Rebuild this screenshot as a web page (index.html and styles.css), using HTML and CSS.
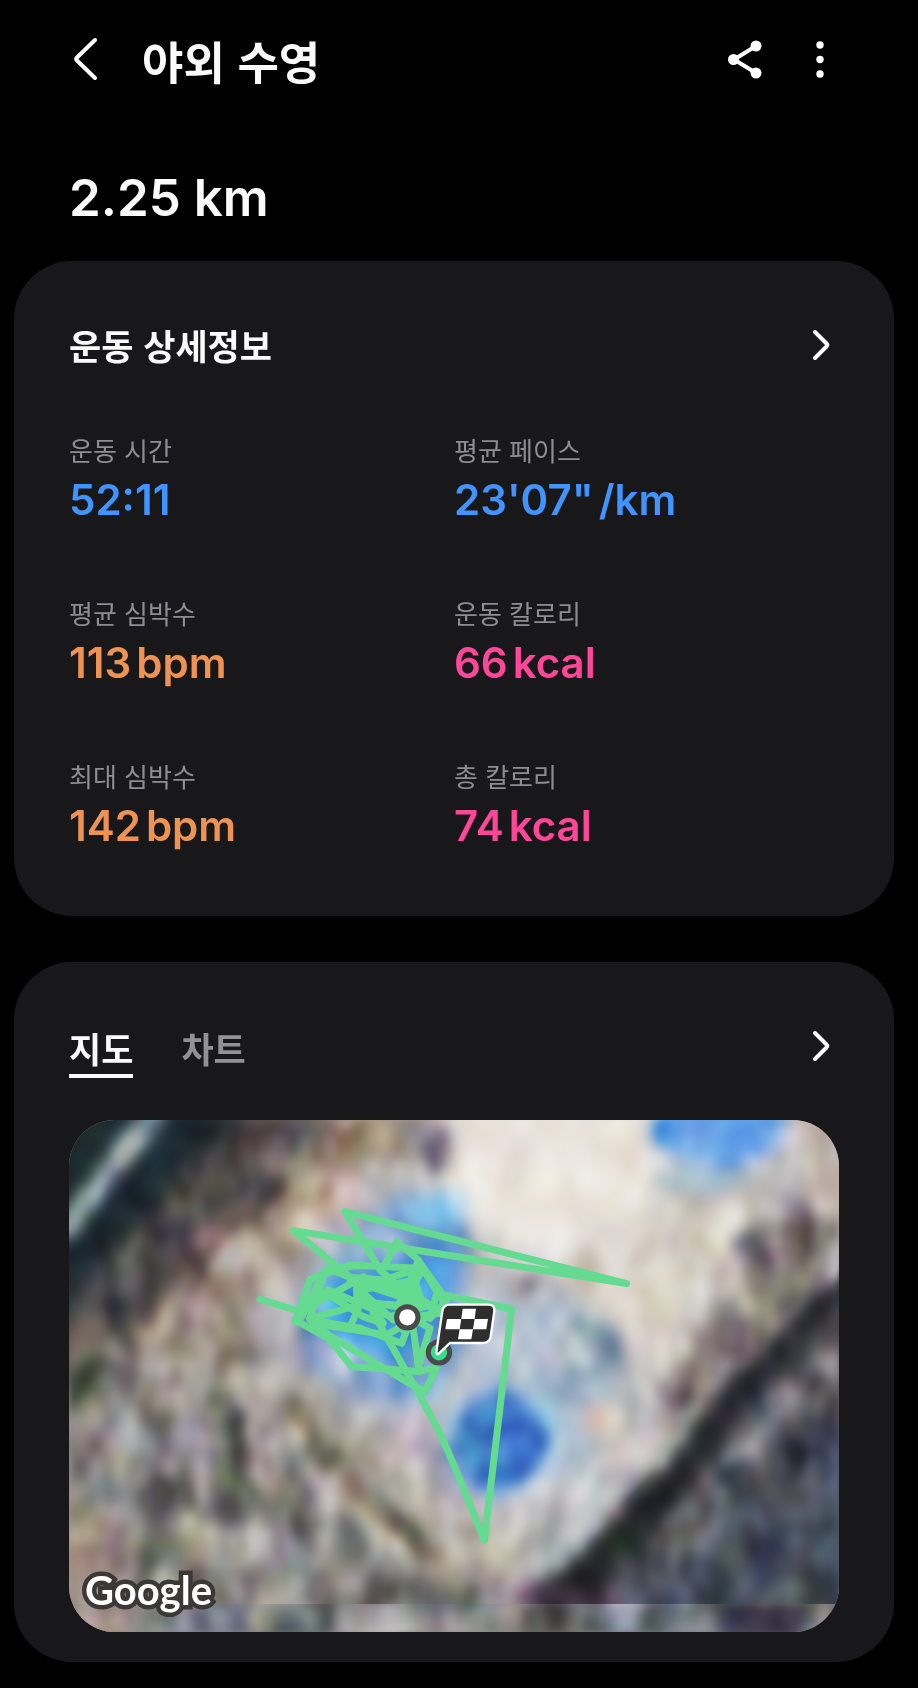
FILE: index.html
```
<!DOCTYPE html>
<html lang="ko">
<head>
    <meta charset="UTF-8">
    <meta name="viewport" content="width=device-width, initial-scale=1">
    <title>야외 수영</title>
    <link rel="stylesheet" href="styles.css">
</head>
<body>

<header class="topbar">
    <button type="button" class="icon-btn" aria-label="뒤로">
        <svg width="48" height="48" viewBox="0 0 48 48"><path class="line" d="M33 5 L15 22.500 Q13.500 24 15 25.500 L33 43"/></svg>
    </button>
    <h1>야외 수영</h1>
    <div class="actions">
        <button type="button" class="icon-btn" aria-label="공유">
            <svg width="48" height="48" viewBox="0 0 48 48">
                <path class="line" d="M35 11 L13 24.500 L35 38"/>
                <circle cx="35" cy="11" r="5.500"/>
                <circle cx="12.500" cy="24.500" r="5.500"/>
                <circle cx="35" cy="38" r="5.500"/>
            </svg>
        </button>
        <button type="button" class="icon-btn" aria-label="더보기">
            <svg width="48" height="48" viewBox="0 0 48 48">
                <circle cx="24" cy="10" r="3.700"/>
                <circle cx="24" cy="24.500" r="3.700"/>
                <circle cx="24" cy="39" r="3.700"/>
            </svg>
        </button>
    </div>
</header>

<main>
    <p class="distance">2.25 km</p>

    <section class="card">
        <div class="card-head">
            <h2>운동 상세정보</h2>
            <button type="button" class="more-btn" aria-label="운동 상세정보 보기">
                <svg width="36" height="36" viewBox="0 0 36 36"><path class="line" d="M12 5 L23.500 16.500 Q25 18 23.500 19.500 L12 31"/></svg>
            </button>
        </div>
        <dl class="stats">
            <div class="stat blue">
                <dt>운동 시간</dt>
                <dd>52:11</dd>
            </div>
            <div class="stat blue">
                <dt>평균 페이스</dt>
                <dd>23'07"<span class="unit">/km</span></dd>
            </div>
            <div class="stat orange">
                <dt>평균 심박수</dt>
                <dd>113<span class="unit">bpm</span></dd>
            </div>
            <div class="stat pink">
                <dt>운동 칼로리</dt>
                <dd>66<span class="unit">kcal</span></dd>
            </div>
            <div class="stat orange">
                <dt>최대 심박수</dt>
                <dd>142<span class="unit">bpm</span></dd>
            </div>
            <div class="stat pink">
                <dt>총 칼로리</dt>
                <dd>74<span class="unit">kcal</span></dd>
            </div>
        </dl>
    </section>

    <section class="card map-card">
        <div class="card-head">
            <div class="tabs" role="tablist">
                <button type="button" class="tab active" role="tab" aria-selected="true">지도</button>
                <button type="button" class="tab" role="tab" aria-selected="false">차트</button>
            </div>
            <button type="button" class="more-btn" aria-label="지도 보기">
                <svg width="36" height="36" viewBox="0 0 36 36"><path class="line" d="M12 5 L23.500 16.500 Q25 18 23.500 19.500 L12 31"/></svg>
            </button>
        </div>

        <svg class="map" viewBox="0 0 770 512" role="img" aria-label="수영 경로 지도">
            <defs>
                <filter id="soft" x="-20%" y="-20%" width="140%" height="140%" color-interpolation-filters="sRGB"><feGaussianBlur stdDeviation="14"/></filter>
                <filter id="mid" x="-20%" y="-20%" width="140%" height="140%" color-interpolation-filters="sRGB"><feGaussianBlur stdDeviation="8"/></filter>
                <filter id="grain" x="0" y="0" width="100%" height="100%" color-interpolation-filters="sRGB">
                    <feTurbulence type="fractalNoise" baseFrequency="0.028 0.02" numOctaves="2" seed="8"/>
                    <feColorMatrix values="1.300 .7 .4 0 -.7  1 1 .4 0 -.7  .9 .7 .8 0 -.7  0 0 0 0 1"/>
                    <feGaussianBlur stdDeviation="3"/>
                </filter>
                <clipPath id="seam"><rect x="0" y="484" width="770" height="28"/></clipPath>
            </defs>

            <!-- satellite ground -->
            <rect width="770" height="512" fill="#9c9692"/>
            <g filter="url(#soft)">
                <path d="M-30 -30 H250 L150 80 L80 180 L-30 310Z" fill="#1a272e"/>
                <path d="M190 -30 H290 L-30 340 V225Z" fill="#5d5452"/>
                <path d="M280 -30 H420 L210 150 L60 330 L-30 420 V330Z" fill="#a5948a"/>
                <path d="M400 -30 H800 V180 L560 430 L440 480 L200 270 L190 170Z" fill="#bfbec0"/>
                <path d="M380 -20 H600 L580 150 L430 130 L350 50Z" fill="#ece6de"/>
                <path d="M500 110 L690 70 L660 200 L580 260 L500 180Z" fill="#d8d1c6"/>
                <path d="M680 110 L770 60 V190 L600 350 L590 270Z" fill="#8f8584"/>
                <path d="M720 -20 H800 V100 L740 80Z" fill="#c0b2a6"/>
                <path d="M-30 270 L60 230 L170 290 L400 450 L430 540 H-30Z" fill="#8b8885"/>
                <path d="M-30 400 L50 380 L80 540 H-30Z" fill="#a08f86"/>
                <path d="M150 250 L230 270 L450 440 L440 480 L350 440Z" fill="#b5ac9f"/>
                <path d="M400 170 L500 180 L560 250 L510 360 L420 360 L390 270Z" fill="#b3c2d2"/>
                <path d="M210 210 L260 230 L340 290 L400 310 L390 380Z" fill="#b0acb9"/>
                <path d="M800 150 V260 L560 512 H430Z" fill="#3a3a41"/>
                <path d="M800 270 V540 H480 L600 440Z" fill="#4a5260"/>
                <path d="M780 235 L698 300 L648 365 L590 440" fill="none" stroke="#86838c" stroke-width="30"/>
            </g>
            <g filter="url(#mid)">
                <path d="M-10 115 L90 -10" fill="none" stroke="#9db0b8" stroke-width="20"/>
                <path d="M50 150 L130 90 L175 40" fill="none" stroke="#3f4b4f" stroke-width="10"/>
                <path d="M120 145 L210 60" fill="none" stroke="#604e49" stroke-width="18"/>
                <path d="M45 210 L130 130" fill="none" stroke="#4f4642" stroke-width="14"/>
                <path d="M195 100 L310 0" fill="none" stroke="#a89784" stroke-width="20"/>
                <path d="M230 110 L290 60" fill="none" stroke="#d8c3b5" stroke-width="16"/>
                <path d="M340 5 L380 5 L380 50 L355 55Z" fill="#868592"/>
                <path d="M160 290 L175 340 L170 350" fill="none" stroke="#5e5450" stroke-width="20"/>
                <path d="M215 280 L300 385 L370 440" fill="none" stroke="#695f53" stroke-width="22"/>
                <path d="M115 370 L125 390 M195 375 V410 M90 430 L60 480" fill="none" stroke="#565553" stroke-width="16"/>
                <path d="M5 265 L35 235" fill="none" stroke="#3c4038" stroke-width="22"/>
                <path d="M470 482 L524 453 L614 353 L664 280 L751 190 L790 160" fill="none" stroke="#26272c" stroke-width="30"/>
                <path d="M450 475 L550 484" fill="none" stroke="#493b4b" stroke-width="22"/>
                <path d="M540 410 L570 430" fill="none" stroke="#213126" stroke-width="26"/>
                <path d="M650 360 L680 340 M700 420 L740 460 M760 440 V480 M620 440 L650 450" fill="none" stroke="#2f3743" stroke-width="14"/>
                <ellipse cx="650" cy="8" rx="68" ry="40" fill="#62a1e6"/>
                <ellipse cx="635" cy="60" rx="50" ry="8" fill="#b5d2dc"/>
                <path d="M330 75 L380 70 L400 120 L400 210 L370 280 L300 290 L240 245 L225 185 L270 130Z" fill="#7da5d0"/>
                <path d="M300 145 L385 130 L385 195 L330 235Z" fill="#4f93e2"/>
                <path d="M330 80 L395 70 L395 105 L340 110Z" fill="#86c3ea"/>
                <path d="M255 155 L370 145 L370 190 L330 245 L250 215Z" fill="#3d96dc"/>
                <path d="M245 215 L290 275 L340 290" fill="none" stroke="#a6aecb" stroke-width="16"/>
                <path d="M250 120 L300 95" fill="none" stroke="#b3aac4" stroke-width="14"/>
                <ellipse cx="520" cy="228" rx="34" ry="30" fill="#8299aa"/>
                <circle cx="430" cy="322" r="58" fill="#a9c5e0"/>
                <ellipse cx="430" cy="322" rx="48" ry="48" fill="#3b7ac6"/>
                <ellipse cx="442" cy="325" rx="18" ry="14" fill="#5295df"/>
                <path d="M477 280 L483 310" fill="none" stroke="#c0e6f5" stroke-width="12"/>
                <ellipse cx="532" cy="300" rx="18" ry="18" fill="#d9c7b8"/>
                <ellipse cx="675" cy="125" rx="15" ry="12" fill="#6f6765"/>
                <ellipse cx="450" cy="165" rx="17" ry="8" fill="#8d888d"/>
            </g>
            <g clip-path="url(#seam)">
                <rect y="484" width="770" height="28" fill="#8e8c8c"/>
                <g filter="url(#mid)">
                    <path d="M0 480 H60 V520 H0Z" fill="#a08b83"/>
                    <path d="M100 480 H180 V520 H100Z" fill="#7d828d"/>
                    <path d="M190 480 H260 V520 H190Z" fill="#636b6b"/>
                    <path d="M290 480 H330 V520 H290Z" fill="#bcbabc"/>
                    <path d="M450 480 H510 V520 H450Z" fill="#565554"/>
                    <path d="M520 480 H640 V520 H520Z" fill="#6c767d"/>
                    <path d="M650 480 H740 V520 H650Z" fill="#3a3549"/>
                </g>
            </g>
            <rect class="grain" width="770" height="512" filter="url(#grain)"/>

            <!-- swim track -->
            <g transform="translate(181 70) scale(.3333)">
                <g class="track">
                    <path d="M30 328 L150 364 L235 300 L420 380 L540 345 L470 300 L310 270 L130 122 L1130 281 L285 65 L390 240 L470 310"/>
                    <path d="M135 395 L180 268 L300 225 L510 235 L400 270 L300 262 L230 235 L155 380"/>
                    <path d="M135 390 L235 445 L305 530 L385 535 L510 545 L560 530 L525 605 L470 575 L235 435 L180 385"/>
                    <path d="M180 385 L225 240 L330 225 M400 235 L440 155 L500 205 L590 330 L540 385 L560 310 L785 357 L703 1052 Q600 790 560 710 L500 600 L370 370"/>
                    <path d="M180 385 L330 345 L300 410 L180 390 L330 415 L455 460 L485 380 L505 530 L540 415 L480 380"/>
                    <path d="M230 310 L340 380 L400 400 L320 290 L320 330 L440 350 L520 240 L590 350 L460 420"/>
                    <path d="M170 355 L340 260 L480 330 L500 270 L330 300 L430 390 L570 370 M485 245 L520 350 L360 340"/>
                    <path d="M190 400 L410 435 L470 400 M300 270 L540 350 M505 210 L470 300"/>
                </g>
                <circle class="pin" cx="472" cy="382" r="32" fill="#fff"/>
                <circle class="pin" cx="567" cy="487" r="32" fill="#35e08d"/>
                <path class="flag" d="M600 344 H714 Q736 344 733 364 L722 440 Q718 459 698 459 H600 L564 493 Q558 493 560 480 L577 364 Q580 344 600 344Z"/>
                <path fill="#fff" d="M638 356 H678 L674 387 H634Z M591 387 H634 L629 418 H586Z M674 387 H714 L709 418 H669Z M629 418 H669 L664 448 H624Z"/>
            </g>

            <text class="google" x="16" y="485">Google</text>
        </svg>
    </section>
</main>

</body>
</html>
```
FILE: styles.css
```
* {
    box-sizing: border-box;
}
body {
    margin: 0;
    padding: 0 24px 26px 14px;
    background-color: #000;
    color: #fafafa;
    font-family: Inter, "Noto Sans CJK KR", sans-serif;
}
h1, h2, p, dl, dd {
    margin: 0;
}
h1, h2, .tab {
    font-family: "Noto Sans CJK KR", sans-serif;
    font-weight: bold;
}
button {
    padding: 0;
    border: 0;
    background: none;
    color: inherit;
    cursor: pointer;
}
button svg {
    display: block;
    fill: #fff;
}
.line {
    fill: none;
    stroke: #fff;
    stroke-width: 4;
    stroke-linecap: round;
}

/* header */
.topbar {
    display: flex;
    align-items: center;
    gap: 32px;
    height: 118px;
    padding: 0 50px 0 48px;
}
h1 {
    padding-top: 4px;
    font-size: 45px;
    line-height: 64px;
}
.actions {
    display: flex;
    gap: 27px;
    margin-left: auto;
}
.distance {
    padding: 48px 55px 31px;
    font-size: 51px;
    font-weight: 600;
    line-height: 64px;
}

/* cards */
.card {
    padding: 52px 55px 60px;
    border-radius: 58px;
    background-color: #18181a;
}
.map-card {
    margin-top: 46px;
    padding-bottom: 30px;
}
.card-head {
    display: flex;
    align-items: center;
    justify-content: space-between;
    height: 64px;
}
h2 {
    font-size: 35px;
    line-height: 52px;
}

.stats {
    display: grid;
    grid-template-columns: 1fr 1fr;
    row-gap: 63px;
    margin-top: 53px;
}
dt {
    color: #8e8e92;
    font-family: "Noto Sans CJK KR", sans-serif;
    font-size: 26px;
    line-height: 40px;
}
dd {
    font-size: 42px;
    font-weight: 600;
    line-height: 60px;
}
.unit {
    margin-left: 5px;
}
.blue dd {
    color: #3f94ff;
}
.orange dd {
    color: #ee9352;
}
.pink dd {
    color: #ff4699;
}

/* map card */
.tabs {
    display: flex;
    gap: 48px;
    padding-top: 8px;
}
.tab {
    border-bottom: 4px solid transparent;
    color: #929294;
    font-size: 35px;
    line-height: 52px;
}
.tab.active {
    border-color: #fafafa;
    color: #fafafa;
}
.map {
    display: block;
    width: 100%;
    margin-top: 42px;
    border-radius: 46px;
}
.grain {
    mix-blend-mode: overlay;
    opacity: .5;
}
.track {
    fill: none;
    stroke: #65da91;
    stroke-width: 21;
    stroke-linecap: round;
    stroke-linejoin: round;
}
.pin {
    stroke: #4a4a4a;
    stroke-width: 15;
}
.flag {
    fill: #2e2e2e;
    stroke: #fff;
    stroke-width: 7;
}
.google {
    fill: #fff;
    stroke: #3b3937;
    stroke-width: 9;
    paint-order: stroke;
    font-family: Lato, sans-serif;
    font-size: 40px;
    font-weight: bold;
}
```
